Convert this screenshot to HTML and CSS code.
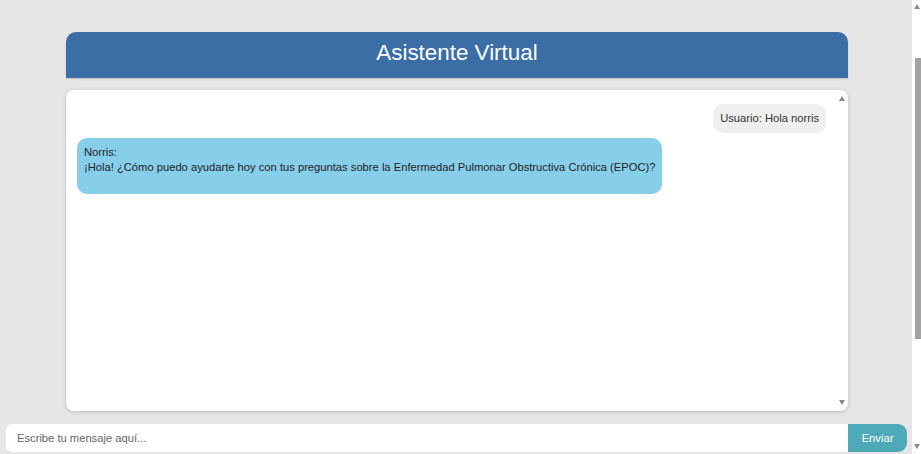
FILE: index.html
```html
<!DOCTYPE html>
<html lang="es">
<head>
<meta charset="utf-8">
<title>Asistente Virtual</title>
<link rel="stylesheet" href="styles.css">
</head>
<body>
<div class="page">
  <div class="container">
    <header class="header"><h1 class="title">Asistente Virtual</h1></header>
    <div class="chat">
      <div class="messages">
        <div class="msg msg-user">Usuario: Hola norris</div>
        <div class="msg msg-bot">Norris:<br>¡Hola! ¿Cómo puedo ayudarte hoy con tus preguntas sobre la Enfermedad Pulmonar Obstructiva Crónica (EPOC)?</div>
      </div>
      <span class="arrow arrow-up"></span>
      <span class="arrow arrow-down"></span>
    </div>
  </div>
  <form class="composer">
    <input class="input" type="text" placeholder="Escribe tu mensaje aquí...">
    <button class="send" type="button">Enviar</button>
  </form>
</div>
<div class="vscroll">
  <span class="sb-arrow sb-up"></span>
  <span class="sb-thumb"></span>
  <span class="sb-arrow sb-down"></span>
</div>
</body>
</html>
```

FILE: styles.css
```css
* { box-sizing: border-box; }
html, body { height: 100%; }
body {
  margin: 0;
  display: flex;
  overflow: hidden;
  background: #e6e6e6;
  font-family: "Liberation Sans", Arial, sans-serif;
  color: #222;
}
.page {
  flex: 1;
  display: flex;
  flex-direction: column;
  padding-top: 32px;
}
.container {
  width: 782px;
  margin: 0 auto;
  position: relative;
  left: 1px;
}
.header {
  height: 46px;
  background: #3a6ea5;
  border-radius: 10px 10px 0 0;
  display: flex;
  align-items: center;
  justify-content: center;
  box-shadow: 0 1px 2px rgba(0,0,0,0.15);
}
.title {
  margin: 0 0 4px;
  font-size: 22.4px;
  font-weight: normal;
  color: #fff;
}
.chat {
  position: relative;
  margin-top: 12px;
  height: 321px;
  background: #fff;
  border-radius: 8px;
  box-shadow: 0 1px 4px rgba(0,0,0,0.18);
  padding: 14px 22px 0 11px;
}
.messages {
  display: flex;
  flex-direction: column;
  gap: 5px;
}
.msg {
  font-size: 11.2px;
  line-height: 15px;
  border-radius: 10px;
  width: fit-content;
}
.msg-user {
  align-self: flex-end;
  background: #efefef;
  padding: 7px;
  color: #333;
}
.msg-bot {
  align-self: flex-start;
  background: #87ceeb;
  padding: 7px 7px 19px 7px;
  color: #222;
}
.arrow {
  position: absolute;
  right: 3px;
  width: 0;
  height: 0;
  border-left: 3.5px solid transparent;
  border-right: 3.5px solid transparent;
}
.arrow-up { top: 6px; border-bottom: 5px solid #8a8a8a; }
.arrow-down { bottom: 6px; border-top: 5px solid #8a8a8a; }
.composer {
  display: flex;
  height: 28px;
  margin: 13px 5px 0 6px;
}
.input {
  flex: 1;
  border: none;
  border-radius: 6px 0 0 6px;
  background: #fff;
  padding: 0 11px;
  font-family: inherit;
  font-size: 11.2px;
  color: #333;
  outline: none;
}
.input::placeholder { color: #666; }
.send {
  width: 59px;
  border: none;
  border-radius: 0 9px 9px 0;
  background: #4eaab8;
  color: #fff;
  font-family: inherit;
  font-size: 11.2px;
  padding: 0;
}
.vscroll {
  width: 9px;
  background: #fff;
  position: relative;
}
.sb-thumb {
  position: absolute;
  top: 58px;
  right: 0;
  width: 6px;
  height: 281px;
  background: #a3a3a3;
}
.sb-arrow {
  position: absolute;
  right: 1px;
  width: 0;
  height: 0;
  border-left: 3px solid transparent;
  border-right: 3px solid transparent;
}
.sb-up { top: 4px; border-bottom: 5px solid #8a8a8a; }
.sb-down { bottom: 5px; border-top: 5px solid #8a8a8a; }
```
